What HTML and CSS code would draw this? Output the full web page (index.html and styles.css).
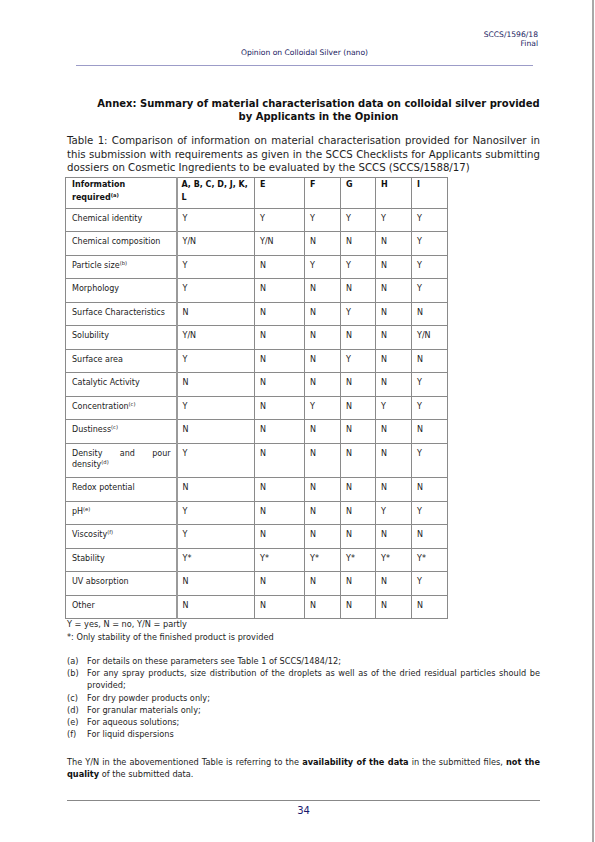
FILE: index.html
```html
<!DOCTYPE html>
<html>
<head>
<meta charset="utf-8">
<link rel="stylesheet" href="styles.css">
</head>
<body>
<div class="page">
  <div class="hdr-ref">SCCS/1596/18<br>Final</div>
  <div class="hdr-title">Opinion on Colloidal Silver (nano)</div>
  <div class="hdr-line"></div>

  <h1 class="annex">Annex: Summary of material characterisation data on colloidal silver provided<br>by Applicants in the Opinion</h1>

  <p class="caption">Table 1: Comparison of information on material characterisation provided for Nanosilver in this submission with requirements as given in the SCCS Checklists for Applicants submitting dossiers on Cosmetic Ingredients to be evaluated by the SCCS (SCCS/1588/17)</p>

  <table class="data">
    <colgroup>
      <col class="c1"><col class="c2"><col class="c3"><col class="c4"><col class="c5"><col class="c6"><col class="c7">
    </colgroup>
    <thead>
      <tr><th>Information required<sup>(a)</sup></th><th class="wide">A, B, C, D, J, K, L</th><th>E</th><th>F</th><th>G</th><th>H</th><th>I</th></tr>
    </thead>
    <tbody>
      <tr><td>Chemical identity</td><td>Y</td><td>Y</td><td>Y</td><td>Y</td><td>Y</td><td>Y</td></tr>
      <tr><td>Chemical composition</td><td>Y/N</td><td>Y/N</td><td>N</td><td>N</td><td>N</td><td>Y</td></tr>
      <tr><td>Particle size<sup>(b)</sup></td><td>Y</td><td>N</td><td>Y</td><td>Y</td><td>N</td><td>Y</td></tr>
      <tr><td>Morphology</td><td>Y</td><td>N</td><td>N</td><td>N</td><td>N</td><td>Y</td></tr>
      <tr><td>Surface Characteristics</td><td>N</td><td>N</td><td>N</td><td>Y</td><td>N</td><td>N</td></tr>
      <tr><td>Solubility</td><td>Y/N</td><td>N</td><td>N</td><td>N</td><td>N</td><td>Y/N</td></tr>
      <tr><td>Surface area</td><td>Y</td><td>N</td><td>N</td><td>Y</td><td>N</td><td>N</td></tr>
      <tr><td>Catalytic Activity</td><td>N</td><td>N</td><td>N</td><td>N</td><td>N</td><td>Y</td></tr>
      <tr><td>Concentration<sup>(c)</sup></td><td>Y</td><td>N</td><td>Y</td><td>N</td><td>Y</td><td>Y</td></tr>
      <tr><td>Dustiness<sup>(c)</sup></td><td>N</td><td>N</td><td>N</td><td>N</td><td>N</td><td>N</td></tr>
      <tr><td class="just">Density and pour density<sup>(d)</sup></td><td>Y</td><td>N</td><td>N</td><td>N</td><td>N</td><td>Y</td></tr>
      <tr><td>Redox potential</td><td>N</td><td>N</td><td>N</td><td>N</td><td>N</td><td>N</td></tr>
      <tr><td>pH<sup>(e)</sup></td><td>Y</td><td>N</td><td>N</td><td>N</td><td>Y</td><td>Y</td></tr>
      <tr><td>Viscosity<sup>(f)</sup></td><td>Y</td><td>N</td><td>N</td><td>N</td><td>N</td><td>N</td></tr>
      <tr><td>Stability</td><td>Y*</td><td>Y*</td><td>Y*</td><td>Y*</td><td>Y*</td><td>Y*</td></tr>
      <tr><td>UV absorption</td><td>N</td><td>N</td><td>N</td><td>N</td><td>N</td><td>Y</td></tr>
      <tr><td>Other</td><td>N</td><td>N</td><td>N</td><td>N</td><td>N</td><td>N</td></tr>
    </tbody>
  </table>

  <div class="legend">
    <div>Y = yes, N = no, Y/N = partly</div>
    <div>*: Only stability of the finished product is provided</div>
  </div>

  <ol class="notes">
    <li><span class="lbl">(a)</span><span class="txt">For details on these parameters see Table 1 of SCCS/1484/12;</span></li>
    <li><span class="lbl">(b)</span><span class="txt">For any spray products, size distribution of the droplets as well as of the dried residual particles should be provided;</span></li>
    <li><span class="lbl">(c)</span><span class="txt">For dry powder products only;</span></li>
    <li><span class="lbl">(d)</span><span class="txt">For granular materials only;</span></li>
    <li><span class="lbl">(e)</span><span class="txt">For aqueous solutions;</span></li>
    <li><span class="lbl">(f)</span><span class="txt">For liquid dispersions</span></li>
  </ol>

  <p class="final">The Y/N in the abovementioned Table is referring to the <b>availability of the data</b> in the submitted files, <b>not the quality</b> of the submitted data.</p>

  <div class="footer">
    <div class="ftr-line"></div>
    <div class="pageno">34</div>
  </div>
</div>
</body>
</html>
```

FILE: styles.css
```css
html, body {
  margin: 0;
  padding: 0;
  background: #ffffff;
}
.page {
  width: 594px;
  height: 842px;
  border-right: 2px solid #a8a8a8;
  box-sizing: border-box;
  font-family: "DejaVu Sans", Verdana, sans-serif;
  color: #1e1e1e;
  padding-left: 67px;
  padding-right: 52px;
  overflow: hidden;
}
.hdr-ref {
  padding-top: 30px;
  text-align: right;
  font-size: 7.6px;
  line-height: 9px;
  color: #1a1a5e;
  margin-right: 2px;
}
.hdr-title {
  text-align: center;
  font-size: 7.6px;
  line-height: 9px;
  color: #1a1a5e;
  margin-left: 9px;
  margin-right: 7px;
}
.hdr-line {
  margin: 8px 7px 0 9px;
  height: 1px;
  background: #9c9cc8;
}
.annex {
  margin: 31px 0 0 30px;
  font-size: 10px;
  line-height: 13px;
  font-weight: bold;
  text-align: center;
  color: #111;
}
.caption {
  margin: 11px 0 0 0;
  font-size: 10.2px;
  line-height: 13.5px;
  text-align: justify;
  color: #1e1e1e;
}
.data {
  margin-top: 2px;
  border-collapse: collapse;
  table-layout: fixed;
  width: 382px;
  margin-left: -2px;
  font-size: 8px;
  color: #222;
}
.c1 { width: 111px; }
.c2 { width: 78px; }
.c3 { width: 50px; }
.c4 { width: 36px; }
.c5 { width: 35px; }
.c6 { width: 36px; }
.c7 { width: 36px; }
.data th, .data td {
  border: 1px solid #8a8a8a;
  text-align: left;
  vertical-align: top;
  padding: 4px 5px 7.5px 5px;
  line-height: 11px;
}
.data th {
  font-weight: bold;
  padding: 0 4px 4px 5px;
  line-height: 13px;
  color: #111;
}
.data th.wide {
  padding-left: 4px;
  padding-right: 2px;
}
.data td:first-child,
.data th:first-child {
  border-right: 2px solid #9a9a9a;
  padding-left: 6px;
}
.data td.just {
  text-align: justify;
}
.data sup {
  font-size: 5.2px;
  line-height: 0;
  vertical-align: 3px;
}
.legend {
  margin-top: -1px;
  font-size: 8.2px;
  line-height: 12.5px;
}
.notes {
  list-style: none;
  margin: 12px 0 0 0;
  padding: 0;
  font-size: 8.2px;
  line-height: 12.2px;
}
.notes li {
  display: flex;
}
.notes .lbl {
  flex: 0 0 20px;
}
.notes .txt {
  flex: 1;
  text-align: justify;
}
.final {
  margin: 16px 0 0 0;
  font-size: 8.2px;
  line-height: 12px;
  text-align: justify;
}
.final b {
  color: #111;
}
.footer {
  margin-top: 20px;
}
.ftr-line {
  height: 1px;
  background: #888;
}
.pageno {
  text-align: center;
  font-size: 10px;
  line-height: 13px;
  margin-top: 2.5px;
  color: #1a1a6e;
}
```
